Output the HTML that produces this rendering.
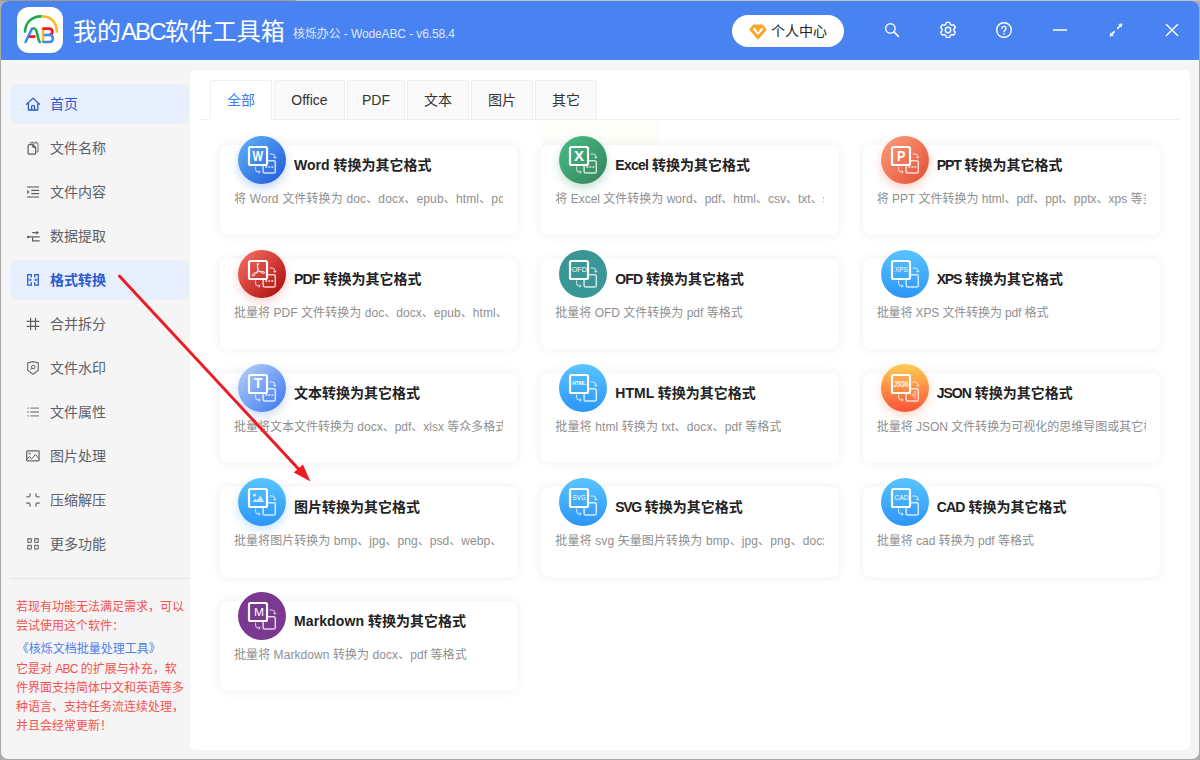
<!DOCTYPE html>
<html lang="zh-CN">
<head>
<meta charset="utf-8">
<title>我的ABC软件工具箱</title>
<style>
*{box-sizing:border-box;margin:0;padding:0}
html,body{width:1200px;height:760px;overflow:hidden}
body{position:relative;background:#ababab;font-family:"Liberation Sans","Noto Sans CJK SC",sans-serif;font-size:14px;color:#333}
.abs{position:absolute}
#edgeT{position:absolute;left:0;top:0;width:1200px;height:1px;background:linear-gradient(90deg,#a29a8c 0,#a29a8c 295px,#c2c2c2 296px)}
#edgeL{position:absolute;left:0;top:0;width:1px;height:760px;background:#a9a9a9}
#win{position:absolute;left:1px;top:1px;width:1198px;height:758px;background:#f5f5f5;border-radius:7px;overflow:hidden}
#hdr{position:absolute;left:0;top:0;width:1198px;height:59px;background:#4983f1}
#logo{position:absolute;left:16px;top:6px;width:46px;height:46px;background:#fff;border-radius:12px}
#title{position:absolute;left:72px;top:13px;height:36px;line-height:36px;font-size:24px;color:#fff;white-space:nowrap}
#title .abc{letter-spacing:-1.9px}
#sub{position:absolute;left:292px;top:24px;height:18px;line-height:18px;font-size:12px;color:rgba(255,255,255,.84);white-space:nowrap;letter-spacing:-.11px}
#pill{position:absolute;left:731px;top:14px;width:112px;height:32px;border-radius:16px;background:#fff}
#pill span{position:absolute;left:39px;top:0;line-height:32px;font-size:14px;color:#222;white-space:nowrap}
.hi{position:absolute;top:18px;width:22px;height:22px}
.mi{position:absolute;left:9px;width:179px;height:40px;border-radius:8px;line-height:40px;font-size:14px;color:#5d6066;white-space:nowrap}
.mi span{position:absolute;left:40px;top:0}
.mi svg{position:absolute;left:15px;top:12px;width:16px;height:16px}
.mi.act{background:#e8effc;color:#2a5bd0}
.mi.b span{font-weight:bold}
#sdiv{position:absolute;left:9px;top:577px;width:180px;height:1px;background:#e4e4e4}
#note{position:absolute;left:15px;top:597.4px;width:172px;font-size:12px;line-height:18.8px;color:#f5514d;white-space:nowrap}
#note a{display:block;color:#4a80ef;margin:3.8px 0 1.7px .7px;text-decoration:none}
#main{position:absolute;left:189px;top:69px;width:1000px;height:680px;background:#fff;border-radius:6px}
#ghost{position:absolute;left:352px;top:51px;width:118px;height:26px;background:#fefef9}
#tabline{position:absolute;left:10px;top:49px;width:980px;height:1px;background:#f0f0f0}
.tab{position:absolute;top:10px;height:40px;border:1px solid #f0f0f0;border-radius:2px 2px 0 0;background:#fafafa;text-align:center;line-height:38px;font-size:14px;color:#333;white-space:nowrap}
.tab.on{background:#fff;border-bottom-color:#fff;color:#3f7df0}
.card{position:absolute;width:297.33px;height:90px;border-radius:8px;background:#fff;box-shadow:0 0 12px rgba(0,0,0,.068)}
.card .ic{position:absolute;left:18px;top:-9px;width:48px;height:48px;border-radius:50%}
.card .ic svg{position:absolute;left:0;top:0;width:48px;height:48px;overflow:visible}
.card h3{position:absolute;left:74px;top:9px;line-height:22px;font-size:14px;font-weight:bold;color:#222;white-space:nowrap}
.card p{position:absolute;left:14px;top:43.8px;width:269px;height:20px;line-height:20px;font-size:12px;color:#8f8f8f;white-space:nowrap;overflow:hidden}
</style>
</head>
<body>
<div id="edgeT"></div><div id="edgeL"></div>
<div id="win">
  <div id="hdr">
    <div id="logo"><svg viewBox="0 0 45 45" width="45" height="45" style="position:absolute;left:1px;top:1px"><g fill="none" stroke-linecap="round" stroke-width="2.6"><path d="M7 23.5 C7.6 14.5 13.5 8.6 23 8.4" stroke="#1ea84c"/><path d="M24.4 8.4 C33.5 8.8 38.6 14.6 38.8 23.6" stroke="#fbb829"/><path d="M14 20.6 L7.6 34" stroke="#3b8af5"/><path d="M15.6 20.2 C18.4 20 18.8 24 19.6 27.6 C20.4 31 20.8 33.2 21.8 34" stroke="#1ea84c"/><path d="M12 28.6 L16.4 28.6" stroke="#f5171b"/><path d="M25 21 L25 33.6" stroke="#fbb829"/><path d="M25.4 20.6 L31 20.6 C35.4 20.6 35.4 26.4 31.6 26.8" stroke="#f5171b"/><path d="M27 27 L31.4 27 C36 27 36.2 34 31.4 34 L25.4 34" stroke="#3b8af5"/></g></svg></div>
    <div id="title">我的<span class="abc">ABC</span>软件工具箱</div>
    <div id="sub">核烁办公 - WodeABC - v6.58.4</div>
    <div id="pill"><svg viewBox="0 0 20 20" width="20" height="20" style="position:absolute;left:16px;top:6.6px"><path d="M5.6 3.6 H14.4 L17.6 7.6 L10 16.4 L2.4 7.6 Z" fill="#f9a62b" stroke="#f9a62b" stroke-width="2" stroke-linejoin="round"/><path d="M6 7 L10 11.6 L14 7" fill="none" stroke="#fff" stroke-width="2" stroke-linecap="round" stroke-linejoin="round"/></svg><span>个人中心</span></div>
    <svg class="hi" style="left:880px" viewBox="0 0 22 22"><circle cx="9.4" cy="9.4" r="4.7" fill="none" stroke="#fff" stroke-width="1.4"/><path d="M12.9 12.9 L17.4 17.4" stroke="#fff" stroke-width="1.6" stroke-linecap="round"/></svg><svg class="hi" style="left:936px" viewBox="0 0 22 22"><g fill="none" stroke="#fff" stroke-width="1.4" stroke-linejoin="round"><path d="M9.3 3.4 h3.4 l.5 2 l1.5 .9 l2 -.6 l1.7 2.9 l-1.5 1.4 v1.8 l1.5 1.4 l-1.7 2.9 l-2 -.6 l-1.5 .9 l-.5 2 h-3.4 l-.5 -2 l-1.5 -.9 l-2 .6 l-1.7 -2.9 l1.5 -1.4 v-1.8 l-1.5 -1.4 l1.7 -2.9 l2 .6 l1.5 -.9 z"/><circle cx="11" cy="11" r="2.7"/></g></svg><svg class="hi" style="left:992px" viewBox="0 0 22 22"><circle cx="11" cy="11" r="7.3" fill="none" stroke="#fff" stroke-width="1.4"/><path d="M9 9.4 C9 6.8 13 6.8 13 9.4 C13 11 11 11 11 12.8" fill="none" stroke="#fff" stroke-width="1.3" stroke-linecap="round"/><circle cx="11" cy="14.9" r=".8" fill="#fff"/></svg><svg class="hi" style="left:1048px" viewBox="0 0 22 22"><path d="M4.6 11 H17.4" stroke="#fff" stroke-width="1.7" stroke-linecap="round"/></svg><svg class="hi" style="left:1104px" viewBox="0 0 22 22"><g stroke="#fff" stroke-width="1.5" fill="#fff" stroke-linecap="round"><path d="M9.4 12.6 L6.6 15.4 M12.6 9.4 L15.4 6.6"/><path d="M5 17 L5.7 13.8 L8.2 16.3 Z M17 5 L16.3 8.2 L13.8 5.7 Z" stroke-width=".6" stroke-linejoin="round"/></g></svg><svg class="hi" style="left:1160px" viewBox="0 0 22 22"><path d="M5.4 5.4 L16.6 16.6 M16.6 5.4 L5.4 16.6" stroke="#fff" stroke-width="1.4" stroke-linecap="round"/></svg>
  </div>
  <div id="side">
<div class="mi act" style="top:83px"><svg viewBox="0 0 16 16"><path d="M1.6 8.3 L8.05 2.1 L14.5 8.3 M3.4 7.4 V14 H12.8 V7.4 M6.6 14 V10.6 Q6.6 9.6 7.6 9.6 H8.6 Q9.5 9.6 9.5 10.6 V14" fill="none" stroke="currentColor" stroke-width="1.3" stroke-linejoin="round" stroke-linecap="round"/></svg><span>首页</span></div>
<div class="mi " style="top:127px"><svg viewBox="0 0 16 16"><path d="M3.1 5.6 Q3.1 4.5 4.2 4.5 H7.8 L10.6 7.4 V13.2 Q10.6 14.1 9.6 14.1 H4.1 Q3.1 14.1 3.1 13.1 Z M7.8 4.5 V6.6 Q7.8 7.4 8.6 7.4 H10.6" fill="none" stroke="currentColor" stroke-width="1.25" stroke-linejoin="round"/><path d="M4.7 2.9 H12 Q13 2.9 13 3.9 V11 Q13 12 12 12 H11.2 M7.3 1.4 V2.9 M10.6 1.4 V2.9" fill="none" stroke="currentColor" stroke-width="1.15" stroke-opacity=".8"/></svg><span>文件名称</span></div>
<div class="mi " style="top:171px"><svg viewBox="0 0 16 16"><path d="M1.9 3 H14.1 M1.9 12.9 H14.1" fill="none" stroke="currentColor" stroke-width="1.5" stroke-opacity=".75"/><path d="M6.3 6.4 H14.1 M6.3 9.6 H14.1" fill="none" stroke="currentColor" stroke-width="1.1"/><path d="M2.1 6 L4.5 8 L2.1 10 Z" fill="currentColor"/></svg><span>文件内容</span></div>
<div class="mi " style="top:215px"><svg viewBox="0 0 16 16"><path d="M7.2 4.7 H12 M3.1 8.8 H14.7 M7.6 9 V12.9 H14.7" fill="none" stroke="currentColor" stroke-width="1.2"/><path d="M11.3 2.8 L14.2 4.7 L11.3 6.6 Z" fill="currentColor"/><circle cx="3.1" cy="8.9" r="1.25" fill="currentColor"/></svg><span>数据提取</span></div>
<div class="mi act b" style="top:259px"><svg viewBox="0 0 16 16"><path d="M6.3 5.5 V2.7 H2.7 V13.1 H6.3 V10.3 M9.7 5.5 V2.7 H13.3 V13.1 H9.7 V10.3" fill="none" stroke="currentColor" stroke-width="1.25"/><path d="M2.7 7.9 H5 M13.3 7.9 H11" fill="none" stroke="currentColor" stroke-width="1" stroke-opacity=".6"/><path d="M4.6 6.2 L7 7.9 L4.6 9.6 Z M11.4 6.2 L9 7.9 L11.4 9.6 Z" fill="currentColor"/></svg><span>格式转换</span></div>
<div class="mi " style="top:303px"><svg viewBox="0 0 16 16"><path d="M5.6 2.1 V13.7 M10.5 2.1 V13.7 M2.1 5.4 H13.9 M2.1 10.4 H13.9" fill="none" stroke="currentColor" stroke-width="1.2" stroke-linecap="round"/></svg><span>合并拆分</span></div>
<div class="mi " style="top:347px"><svg viewBox="0 0 16 16"><path d="M8 1.6 L13.3 2.9 V10.2 L8 14.2 L2.7 10.2 V2.9 Z" fill="none" stroke="currentColor" stroke-width="1.15" stroke-linejoin="round" stroke-opacity=".9"/><circle cx="8.3" cy="7" r="1.8" fill="none" stroke="currentColor" stroke-width="1"/><path d="M7 8.3 L5.6 9.5" stroke="currentColor" stroke-width="1" stroke-linecap="round"/></svg><span>文件水印</span></div>
<div class="mi " style="top:391px"><svg viewBox="0 0 16 16"><path d="M5.3 4.2 H13.9 M5.3 8 H13.9 M5.3 11.8 H13.9 M2.3 4.2 H3.9 M2.3 8 H3.9 M2.3 11.8 H3.9" fill="none" stroke="currentColor" stroke-width="1.3" stroke-opacity=".7"/></svg><span>文件属性</span></div>
<div class="mi " style="top:435px"><svg viewBox="0 0 16 16"><rect x="1.7" y="2.9" width="12.4" height="10" rx="0.8" fill="none" stroke="currentColor" stroke-width="1.25" stroke-opacity=".95"/><circle cx="4.6" cy="5.6" r="1" fill="currentColor" fill-opacity=".85"/><path d="M1.9 11.3 L4.5 8.4 L6.5 11 L10.4 6.5 L14.1 10.9" fill="none" stroke="currentColor" stroke-width="1" stroke-linejoin="round"/></svg><span>图片处理</span></div>
<div class="mi " style="top:479px"><svg viewBox="0 0 16 16"><path d="M1.4 4.7 H3.8 Q4.9 4.7 4.9 3.6 V1.6 M14.6 4.7 H12.2 Q11.1 4.7 11.1 3.6 V1.6 M1.4 11.1 H3.8 Q4.9 11.1 4.9 12.2 V14.4 M14.6 11.1 H12.2 Q11.1 11.1 11.1 12.2 V14.4" fill="none" stroke="currentColor" stroke-width="1.6" stroke-opacity=".75"/></svg><span>压缩解压</span></div>
<div class="mi " style="top:523px"><svg viewBox="0 0 16 16"><g fill="none" stroke="currentColor" stroke-width="1.3" stroke-opacity=".85"><rect x="2.75" y="2.75" width="3.6" height="3.6" rx="0.5"/><rect x="9.65" y="2.75" width="3.6" height="3.6" rx="0.5"/><rect x="2.75" y="9.45" width="3.6" height="3.6" rx="0.5"/><rect x="9.65" y="9.45" width="3.6" height="3.6" rx="0.5"/></g></svg><span>更多功能</span></div>
<div id="sdiv"></div>
<div id="note">若现有功能无法满足需求，可以<br>尝试使用这个软件：<a>《核烁文档批量处理工具》</a>它是对 <span style="letter-spacing:-.85px">ABC</span> 的扩展与补充，软<br>件界面支持简体中文和英语等多<br>种语言、支持任务流连续处理，<br>并且会经常更新！</div>
  </div>
  <div id="main">
    <div id="ghost"></div>
    <div id="tabline"></div>
<div class="tab on" style="left:20px;width:62px">全部</div>
<div class="tab " style="left:84px;width:71px">Office</div>
<div class="tab " style="left:157px;width:58px">PDF</div>
<div class="tab " style="left:217px;width:62px">文本</div>
<div class="tab " style="left:281px;width:62px">图片</div>
<div class="tab " style="left:345px;width:62px">其它</div>
<div class="card" style="left:30.00px;top:75px"><div class="ic" style="box-shadow:0 4px 10px rgba(60,120,230,.30)"><svg viewBox="0 0 48 48"><defs><linearGradient id="g1" gradientUnits="userSpaceOnUse" x1="6" y1="6" x2="42" y2="42"><stop offset="0" stop-color="#58a8f3"/><stop offset="1" stop-color="#2862dc"/></linearGradient></defs><circle cx="24" cy="24" r="24" fill="url(#g1)"/><g fill="none" stroke="#fff" stroke-opacity=".78"><rect x="25.1" y="24.8" width="12.2" height="12.3" rx="1.6" stroke-width="1.5"/><path d="M31.6 18 h2.6 a2.6 2.6 0 0 1 2.6 2.6 v1.6 M35.3 20.8 l1.5 1.5 l1.5 -1.5" stroke-width="1"/><path d="M17.6 30.6 v2.8 a2.6 2.6 0 0 0 2.6 2.6 h1.8 M20.7 34.5 l1.5 1.5 l-1.5 1.5" stroke-width="1"/></g><g fill="#fff" fill-opacity=".72"><rect x="27.4" y="30.1" width="1.9" height="1.8"/><rect x="30.4" y="30.1" width="1.9" height="1.8"/><rect x="33.4" y="30.1" width="1.9" height="1.8"/></g><rect x="11" y="11" width="18" height="18" rx="1.6" fill="url(#g1)" stroke="#fff" stroke-width="2.2"/><text x="19.9" y="24.5" text-anchor="middle" font-family="Liberation Sans, sans-serif" font-weight="bold" font-size="14" fill="#fff" textLength="10.6" lengthAdjust="spacingAndGlyphs">W</text></svg></div><h3>Word 转换为其它格式</h3><p style="letter-spacing:0.15px">将 Word 文件转换为 doc、docx、epub、html、pdf、xps 等格式</p></div>
<div class="card" style="left:351.33px;top:75px"><div class="ic" style="box-shadow:0 4px 10px rgba(60,160,110,.30)"><svg viewBox="0 0 48 48"><defs><linearGradient id="g2" gradientUnits="userSpaceOnUse" x1="6" y1="6" x2="42" y2="42"><stop offset="0" stop-color="#46b680"/><stop offset="1" stop-color="#378a60"/></linearGradient></defs><circle cx="24" cy="24" r="24" fill="url(#g2)"/><g fill="none" stroke="#fff" stroke-opacity=".78"><rect x="25.1" y="24.8" width="12.2" height="12.3" rx="1.6" stroke-width="1.5"/><path d="M31.6 18 h2.6 a2.6 2.6 0 0 1 2.6 2.6 v1.6 M35.3 20.8 l1.5 1.5 l1.5 -1.5" stroke-width="1"/><path d="M17.6 30.6 v2.8 a2.6 2.6 0 0 0 2.6 2.6 h1.8 M20.7 34.5 l1.5 1.5 l-1.5 1.5" stroke-width="1"/></g><g fill="#fff" fill-opacity=".72"><rect x="27.4" y="30.1" width="1.9" height="1.8"/><rect x="30.4" y="30.1" width="1.9" height="1.8"/><rect x="33.4" y="30.1" width="1.9" height="1.8"/></g><rect x="11" y="11" width="18" height="18" rx="1.6" fill="url(#g2)" stroke="#fff" stroke-width="2.2"/><text x="20.1" y="24.5" text-anchor="middle" font-family="Liberation Sans, sans-serif" font-weight="bold" font-size="14" fill="#fff" textLength="10" lengthAdjust="spacingAndGlyphs">X</text></svg></div><h3><span style="letter-spacing:-0.75px">Excel</span> 转换为其它格式</h3><p>将 Excel 文件转换为 word、pdf、html、csv、txt、sql 等格式</p></div>
<div class="card" style="left:672.66px;top:75px"><div class="ic" style="box-shadow:0 4px 10px rgba(240,110,80,.30)"><svg viewBox="0 0 48 48"><defs><linearGradient id="g3" gradientUnits="userSpaceOnUse" x1="6" y1="6" x2="42" y2="42"><stop offset="0" stop-color="#f89675"/><stop offset="1" stop-color="#e6573a"/></linearGradient></defs><circle cx="24" cy="24" r="24" fill="url(#g3)"/><g fill="none" stroke="#fff" stroke-opacity=".78"><rect x="25.1" y="24.8" width="12.2" height="12.3" rx="1.6" stroke-width="1.5"/><path d="M31.6 18 h2.6 a2.6 2.6 0 0 1 2.6 2.6 v1.6 M35.3 20.8 l1.5 1.5 l1.5 -1.5" stroke-width="1"/><path d="M17.6 30.6 v2.8 a2.6 2.6 0 0 0 2.6 2.6 h1.8 M20.7 34.5 l1.5 1.5 l-1.5 1.5" stroke-width="1"/></g><g fill="#fff" fill-opacity=".72"><rect x="27.4" y="30.1" width="1.9" height="1.8"/><rect x="30.4" y="30.1" width="1.9" height="1.8"/><rect x="33.4" y="30.1" width="1.9" height="1.8"/></g><rect x="11" y="11" width="18" height="18" rx="1.6" fill="url(#g3)" stroke="#fff" stroke-width="2.2"/><text x="20.3" y="24.5" text-anchor="middle" font-family="Liberation Sans, sans-serif" font-weight="bold" font-size="14" fill="#fff" textLength="8.4" lengthAdjust="spacingAndGlyphs">P</text></svg></div><h3><span style="letter-spacing:-1.1px">PPT</span> 转换为其它格式</h3><p>将 PPT 文件转换为 html、pdf、ppt、pptx、xps 等多种格式</p></div>
<div class="card" style="left:30.00px;top:189px"><div class="ic" style="box-shadow:0 4px 10px rgba(220,50,40,.22)"><svg viewBox="0 0 48 48"><defs><linearGradient id="g4" gradientUnits="userSpaceOnUse" x1="6" y1="6" x2="42" y2="42"><stop offset="0" stop-color="#f0645c"/><stop offset="1" stop-color="#b21512"/></linearGradient></defs><circle cx="24" cy="24" r="24" fill="url(#g4)"/><g fill="none" stroke="#fff" stroke-opacity=".78"><rect x="25.1" y="24.8" width="12.2" height="12.3" rx="1.6" stroke-width="1.5"/><path d="M31.6 18 h2.6 a2.6 2.6 0 0 1 2.6 2.6 v1.6 M35.3 20.8 l1.5 1.5 l1.5 -1.5" stroke-width="1"/><path d="M17.6 30.6 v2.8 a2.6 2.6 0 0 0 2.6 2.6 h1.8 M20.7 34.5 l1.5 1.5 l-1.5 1.5" stroke-width="1"/></g><g fill="#fff" fill-opacity=".72"><rect x="27.4" y="30.1" width="1.9" height="1.8"/><rect x="30.4" y="30.1" width="1.9" height="1.8"/><rect x="33.4" y="30.1" width="1.9" height="1.8"/></g><rect x="11" y="11" width="18" height="18" rx="1.6" fill="url(#g4)" stroke="#fff" stroke-width="2.2"/><g fill="none" stroke="#fff" stroke-width="1" stroke-linecap="round" stroke-linejoin="round"><path d="M20.2 14 c-1 0 -1 1.6 -0.4 3.4 c0.5 1.6 0.4 3 -0.6 4.6 c-1.2 2 -2.6 3.4 -4 3.8 c-1 0.3 -1.6 -0.6 -0.6 -1.5 c1.4 -1.2 3.6 -2.2 5.8 -2.6 c2 -0.4 4 -0.4 5.6 0.1 c1.2 0.4 1 1.5 -0.2 1.5 c-1.6 0 -3.6 -1.2 -5 -2.8 c-1.2 -1.4 -1.6 -3 -1.2 -5 c0.2 -1 0.1 -1.5 -0.4 -1.5 z"/></g></svg></div><h3><span style="letter-spacing:-0.8px">PDF</span> 转换为其它格式</h3><p style="letter-spacing:0.05px">批量将 PDF 文件转换为 doc、docx、epub、html、</p></div>
<div class="card" style="left:351.33px;top:189px"><div class="ic" style="box-shadow:none"><svg viewBox="0 0 48 48"><defs><linearGradient id="g5" gradientUnits="userSpaceOnUse" x1="0" y1="0" x2="0" y2="48"><stop offset="0" stop-color="#3a9797"/><stop offset="1" stop-color="#3a9797"/></linearGradient></defs><circle cx="24" cy="24" r="24" fill="url(#g5)"/><g fill="none" stroke="#fff" stroke-opacity=".78"><rect x="25.1" y="24.8" width="12.2" height="12.3" rx="1.6" stroke-width="1.5"/><path d="M31.6 18 h2.6 a2.6 2.6 0 0 1 2.6 2.6 v1.6 M35.3 20.8 l1.5 1.5 l1.5 -1.5" stroke-width="1"/><path d="M17.6 30.6 v2.8 a2.6 2.6 0 0 0 2.6 2.6 h1.8 M20.7 34.5 l1.5 1.5 l-1.5 1.5" stroke-width="1"/></g><rect x="11" y="11" width="18" height="18" rx="1.6" fill="url(#g5)" stroke="#fff" stroke-width="2.2"/><text x="20.3" y="21.9" text-anchor="middle" font-family="Liberation Sans, sans-serif" font-weight="normal" font-size="7.1" fill="#fff" textLength="15" lengthAdjust="spacingAndGlyphs">OFD</text></svg></div><h3><span style="letter-spacing:-0.9px">OFD</span> 转换为其它格式</h3><p>批量将 OFD 文件转换为 pdf 等格式</p></div>
<div class="card" style="left:672.66px;top:189px"><div class="ic" style="box-shadow:none"><svg viewBox="0 0 48 48"><defs><linearGradient id="g6" gradientUnits="userSpaceOnUse" x1="0" y1="2" x2="0" y2="46"><stop offset="0" stop-color="#58c2ff"/><stop offset="1" stop-color="#2d97f8"/></linearGradient></defs><circle cx="24" cy="24" r="24" fill="url(#g6)"/><g fill="none" stroke="#fff" stroke-opacity=".78"><rect x="25.1" y="24.8" width="12.2" height="12.3" rx="1.6" stroke-width="1.5"/><path d="M31.6 18 h2.6 a2.6 2.6 0 0 1 2.6 2.6 v1.6 M35.3 20.8 l1.5 1.5 l1.5 -1.5" stroke-width="1"/><path d="M17.6 30.6 v2.8 a2.6 2.6 0 0 0 2.6 2.6 h1.8 M20.7 34.5 l1.5 1.5 l-1.5 1.5" stroke-width="1"/></g><rect x="11" y="11" width="18" height="18" rx="1.6" fill="url(#g6)" stroke="#fff" stroke-width="2.2"/><text x="20.4" y="21.9" text-anchor="middle" font-family="Liberation Sans, sans-serif" font-weight="normal" font-size="7.1" fill="#fff" textLength="12.9" lengthAdjust="spacingAndGlyphs">XPS</text></svg></div><h3><span style="letter-spacing:-1.15px">XPS</span> 转换为其它格式</h3><p style="letter-spacing:-0.12px">批量将 XPS 文件转换为 pdf 格式</p></div>
<div class="card" style="left:30.00px;top:303px"><div class="ic" style="box-shadow:0 4px 10px rgba(90,140,240,.30)"><svg viewBox="0 0 48 48"><defs><linearGradient id="g7" gradientUnits="userSpaceOnUse" x1="6" y1="6" x2="42" y2="42"><stop offset="0" stop-color="#a9c6f8"/><stop offset="1" stop-color="#4882ef"/></linearGradient></defs><circle cx="24" cy="24" r="24" fill="url(#g7)"/><g fill="none" stroke="#fff" stroke-opacity=".78"><rect x="25.1" y="24.8" width="12.2" height="12.3" rx="1.6" stroke-width="1.5"/><path d="M31.6 18 h2.6 a2.6 2.6 0 0 1 2.6 2.6 v1.6 M35.3 20.8 l1.5 1.5 l1.5 -1.5" stroke-width="1"/><path d="M17.6 30.6 v2.8 a2.6 2.6 0 0 0 2.6 2.6 h1.8 M20.7 34.5 l1.5 1.5 l-1.5 1.5" stroke-width="1"/></g><g fill="#fff" fill-opacity=".72"><rect x="27.4" y="30.1" width="1.9" height="1.8"/><rect x="30.4" y="30.1" width="1.9" height="1.8"/><rect x="33.4" y="30.1" width="1.9" height="1.8"/></g><rect x="11" y="11" width="18" height="18" rx="1.6" fill="url(#g7)" stroke="#fff" stroke-width="2.2"/><text x="20.1" y="24.3" text-anchor="middle" font-family="Liberation Sans, sans-serif" font-weight="bold" font-size="14" fill="#fff" textLength="8.6" lengthAdjust="spacingAndGlyphs">T</text></svg></div><h3>文本转换为其它格式</h3><p>批量将文本文件转换为 docx、pdf、xlsx 等众多格式</p></div>
<div class="card" style="left:351.33px;top:303px"><div class="ic" style="box-shadow:none"><svg viewBox="0 0 48 48"><defs><linearGradient id="g8" gradientUnits="userSpaceOnUse" x1="0" y1="2" x2="0" y2="46"><stop offset="0" stop-color="#58c2ff"/><stop offset="1" stop-color="#2d97f8"/></linearGradient></defs><circle cx="24" cy="24" r="24" fill="url(#g8)"/><g fill="none" stroke="#fff" stroke-opacity=".78"><rect x="25.1" y="24.8" width="12.2" height="12.3" rx="1.6" stroke-width="1.5"/><path d="M31.6 18 h2.6 a2.6 2.6 0 0 1 2.6 2.6 v1.6 M35.3 20.8 l1.5 1.5 l1.5 -1.5" stroke-width="1"/><path d="M17.6 30.6 v2.8 a2.6 2.6 0 0 0 2.6 2.6 h1.8 M20.7 34.5 l1.5 1.5 l-1.5 1.5" stroke-width="1"/></g><rect x="11" y="11" width="18" height="18" rx="1.6" fill="url(#g8)" stroke="#fff" stroke-width="2.2"/><text x="20.1" y="21.4" text-anchor="middle" font-family="Liberation Sans, sans-serif" font-weight="bold" font-size="6" fill="#fff" textLength="13.6" lengthAdjust="spacingAndGlyphs">HTML</text></svg></div><h3>HTML 转换为其它格式</h3><p style="letter-spacing:0.12px">批量将 html 转换为 txt、docx、pdf 等格式</p></div>
<div class="card" style="left:672.66px;top:303px"><div class="ic" style="box-shadow:0 4px 10px rgba(250,120,60,.28)"><svg viewBox="0 0 48 48"><defs><linearGradient id="g9" gradientUnits="userSpaceOnUse" x1="0" y1="2" x2="0" y2="46"><stop offset="0" stop-color="#fdc852"/><stop offset="1" stop-color="#fc5638"/></linearGradient></defs><circle cx="24" cy="24" r="24" fill="url(#g9)"/><g fill="none" stroke="#fff" stroke-opacity=".78"><rect x="25.1" y="24.8" width="12.2" height="12.3" rx="1.6" stroke-width="1.5"/><path d="M31.6 18 h2.6 a2.6 2.6 0 0 1 2.6 2.6 v1.6 M35.3 20.8 l1.5 1.5 l1.5 -1.5" stroke-width="1"/><path d="M17.6 30.6 v2.8 a2.6 2.6 0 0 0 2.6 2.6 h1.8 M20.7 34.5 l1.5 1.5 l-1.5 1.5" stroke-width="1"/></g><g fill="none" stroke="#fff" stroke-opacity=".6" stroke-width=".8"><path d="M29 31 h2 M31 31 l2.4 -2.6 M31 31 l2.6 0 M31 31 l2.4 2.6"/><circle cx="34.2" cy="28" r=".8"/><circle cx="34.4" cy="31" r=".8"/><circle cx="34.2" cy="34" r=".8"/></g><rect x="11" y="11" width="18" height="18" rx="1.6" fill="url(#g9)" stroke="#fff" stroke-width="2.2"/><text x="20.2" y="22.8" text-anchor="middle" font-family="Liberation Sans, sans-serif" font-weight="bold" font-size="8.6" fill="#fff" textLength="14.2" lengthAdjust="spacingAndGlyphs">JSON</text></svg></div><h3><span style="letter-spacing:-1.0px">JSON</span> 转换为其它格式</h3><p>批量将 JSON 文件转换为可视化的思维导图或其它格式</p></div>
<div class="card" style="left:30.00px;top:417px"><div class="ic" style="box-shadow:0 4px 10px rgba(60,160,250,.28)"><svg viewBox="0 0 48 48"><defs><linearGradient id="g10" gradientUnits="userSpaceOnUse" x1="0" y1="2" x2="0" y2="46"><stop offset="0" stop-color="#58c2ff"/><stop offset="1" stop-color="#2d97f8"/></linearGradient></defs><circle cx="24" cy="24" r="24" fill="url(#g10)"/><g fill="none" stroke="#fff" stroke-opacity=".78"><rect x="25.1" y="24.8" width="12.2" height="12.3" rx="1.6" stroke-width="1.5"/><path d="M31.6 18 h2.6 a2.6 2.6 0 0 1 2.6 2.6 v1.6 M35.3 20.8 l1.5 1.5 l1.5 -1.5" stroke-width="1"/><path d="M17.6 30.6 v2.8 a2.6 2.6 0 0 0 2.6 2.6 h1.8 M20.7 34.5 l1.5 1.5 l-1.5 1.5" stroke-width="1"/></g><rect x="11" y="11" width="18" height="18" rx="1.6" fill="url(#g10)" stroke="#fff" stroke-width="2.2"/><g fill="#fff" fill-opacity=".72"><circle cx="16.5" cy="17" r="1.5"/><path d="M14.2 24.1 l3 -3.4 l1.8 1.5 l3.4 -4.8 l3.8 6.7 z"/></g></svg></div><h3>图片转换为其它格式</h3><p style="letter-spacing:0.05px">批量将图片转换为 bmp、jpg、png、psd、webp、</p></div>
<div class="card" style="left:351.33px;top:417px"><div class="ic" style="box-shadow:none"><svg viewBox="0 0 48 48"><defs><linearGradient id="g11" gradientUnits="userSpaceOnUse" x1="0" y1="2" x2="0" y2="46"><stop offset="0" stop-color="#58c2ff"/><stop offset="1" stop-color="#2d97f8"/></linearGradient></defs><circle cx="24" cy="24" r="24" fill="url(#g11)"/><g fill="none" stroke="#fff" stroke-opacity=".78"><rect x="25.1" y="24.8" width="12.2" height="12.3" rx="1.6" stroke-width="1.5"/><path d="M31.6 18 h2.6 a2.6 2.6 0 0 1 2.6 2.6 v1.6 M35.3 20.8 l1.5 1.5 l1.5 -1.5" stroke-width="1"/><path d="M17.6 30.6 v2.8 a2.6 2.6 0 0 0 2.6 2.6 h1.8 M20.7 34.5 l1.5 1.5 l-1.5 1.5" stroke-width="1"/></g><rect x="11" y="11" width="18" height="18" rx="1.6" fill="url(#g11)" stroke="#fff" stroke-width="2.2"/><text x="20.2" y="21.9" text-anchor="middle" font-family="Liberation Sans, sans-serif" font-weight="normal" font-size="7.1" fill="#fff" textLength="13.3" lengthAdjust="spacingAndGlyphs">SVG</text></svg></div><h3><span style="letter-spacing:-1.35px">SVG</span> 转换为其它格式</h3><p style="letter-spacing:0.12px">批量将 svg 矢量图片转换为 bmp、jpg、png、docx 等格式</p></div>
<div class="card" style="left:672.66px;top:417px"><div class="ic" style="box-shadow:none"><svg viewBox="0 0 48 48"><defs><linearGradient id="g12" gradientUnits="userSpaceOnUse" x1="0" y1="2" x2="0" y2="46"><stop offset="0" stop-color="#58c2ff"/><stop offset="1" stop-color="#2d97f8"/></linearGradient></defs><circle cx="24" cy="24" r="24" fill="url(#g12)"/><g fill="none" stroke="#fff" stroke-opacity=".78"><rect x="25.1" y="24.8" width="12.2" height="12.3" rx="1.6" stroke-width="1.5"/><path d="M31.6 18 h2.6 a2.6 2.6 0 0 1 2.6 2.6 v1.6 M35.3 20.8 l1.5 1.5 l1.5 -1.5" stroke-width="1"/><path d="M17.6 30.6 v2.8 a2.6 2.6 0 0 0 2.6 2.6 h1.8 M20.7 34.5 l1.5 1.5 l-1.5 1.5" stroke-width="1"/></g><rect x="11" y="11" width="18" height="18" rx="1.6" fill="url(#g12)" stroke="#fff" stroke-width="2.2"/><text x="20.6" y="21.9" text-anchor="middle" font-family="Liberation Sans, sans-serif" font-weight="normal" font-size="7.1" fill="#fff" textLength="14.2" lengthAdjust="spacingAndGlyphs">CAD</text></svg></div><h3><span style="letter-spacing:-0.8px">CAD</span> 转换为其它格式</h3><p>批量将 cad 转换为 pdf 等格式</p></div>
<div class="card" style="left:30.00px;top:531px"><div class="ic" style="box-shadow:none"><svg viewBox="0 0 48 48"><defs><linearGradient id="g13" gradientUnits="userSpaceOnUse" x1="0" y1="0" x2="0" y2="48"><stop offset="0" stop-color="#7b3890"/><stop offset="1" stop-color="#7b3890"/></linearGradient></defs><circle cx="24" cy="24" r="24" fill="url(#g13)"/><g fill="none" stroke="#fff" stroke-opacity=".78"><rect x="25.1" y="24.8" width="12.2" height="12.3" rx="1.6" stroke-width="1.5"/><path d="M31.6 18 h2.6 a2.6 2.6 0 0 1 2.6 2.6 v1.6 M35.3 20.8 l1.5 1.5 l1.5 -1.5" stroke-width="1"/><path d="M17.6 30.6 v2.8 a2.6 2.6 0 0 0 2.6 2.6 h1.8 M20.7 34.5 l1.5 1.5 l-1.5 1.5" stroke-width="1"/></g><rect x="11" y="11" width="18" height="18" rx="1.6" fill="url(#g13)" stroke="#fff" stroke-width="2.2"/><text x="20.9" y="23.6" text-anchor="middle" font-family="Liberation Sans, sans-serif" font-weight="normal" font-size="10.3" fill="#fff" textLength="10" lengthAdjust="spacingAndGlyphs">M</text></svg></div><h3><span style="letter-spacing:0.1px">Markdown</span> 转换为其它格式</h3><p style="letter-spacing:0.07px">批量将 Markdown 转换为 docx、pdf 等格式</p></div>
  </div>
</div>
<svg class="abs" style="left:0;top:0;pointer-events:none" width="1200" height="760" viewBox="0 0 1200 760"><path d="M119.6 276.2 L299 469.4" stroke="#ed1c24" stroke-width="3" stroke-linecap="round" fill="none"/><path d="M310.5 481.5 L293.8 472.4 L302.9 464.6 Z" fill="#ed1c24"/></svg>
</body>
</html>
